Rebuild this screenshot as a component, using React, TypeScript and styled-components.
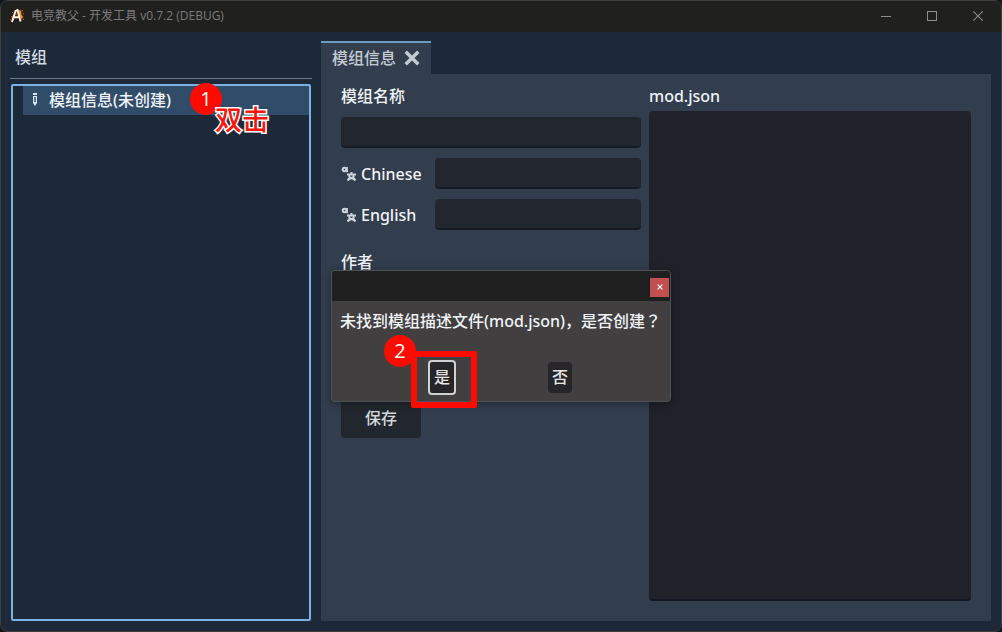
import React from "react";
import styled, { createGlobalStyle } from "styled-components";

const Global = createGlobalStyle`
  * { box-sizing: border-box; }
  body {
    margin: 0;
    background: #14181c;
    color: #f0f3f6;
    font: 500 16px/24px "Noto Sans", "Noto Sans CJK SC", sans-serif;
  }
  button, input, textarea { font: inherit; color: inherit; }
`;

const Frame = styled.div`
  position: relative;
  display: flex;
  flex-direction: column;
  min-height: 100vh;
  border: 1px solid #3c3f3e;
  border-radius: 8px;
  background: #1d2938;
  overflow: hidden;
`;

const TitleBar = styled.header`
  display: flex;
  align-items: center;
  height: 31px;
  padding: 0 0 2px 8px;
  background: #20201f;
`;

const AppTitle = styled.h1`
  flex: 1;
  margin: 0 0 0 6px;
  color: #7c7c7c;
  font: 400 12px/16px "Open Sans", "Noto Sans CJK SC", sans-serif;
`;

const WindowButton = styled.button`
  display: flex;
  align-items: center;
  justify-content: center;
  width: 46px;
  height: 28px;
  padding: 0;
  border: 0;
  background: none;
  color: #8c8c8c;
`;

const Body = styled.main`
  flex: 1;
  display: grid;
  grid-template-columns: 302px minmax(0, 1fr);
  gap: 9px;
  padding: 9px 10px 10px 9px;
`;

const Sidebar = styled.section`
  display: flex;
  flex-direction: column;
`;

const SidebarTitle = styled.h2`
  margin: 0 0 5px;
  padding: 4px 5px 9px;
  border-bottom: 1px solid #6e7987;
  color: #d3dae2;
  font: inherit;
`;

const Tree = styled.div`
  flex: 1;
  margin: 0 1px;
  padding-left: 10px;
  border: 2px solid #7ab2e6;
  border-radius: 2px;
`;

const TreeItem = styled.button`
  position: relative;
  display: flex;
  align-items: center;
  gap: 10px;
  width: 100%;
  height: 29px;
  padding: 0 0 2px 8px;
  border: 0;
  background: #304c68;
  text-align: left;
`;

const Workspace = styled.section`
  display: flex;
  flex-direction: column;
`;

const Tab = styled.div`
  display: flex;
  align-items: center;
  gap: 8px;
  align-self: flex-start;
  height: 33px;
  padding: 0 11px 2px;
  border-top: 2px solid #6d9abf;
  background: #323d4d;
  color: #c3cbd3;
`;

const TabClose = styled.button`
  display: flex;
  padding: 0;
  border: 0;
  background: none;
`;

const Panel = styled.div`
  flex: 1;
  display: grid;
  grid-template-columns: 300px minmax(0, 1fr);
  gap: 8px;
  padding: 10px 20px 20px;
  background: #323d4d;
`;

const Form = styled.form`
  display: flex;
  flex-direction: column;
  gap: 10px;
`;

const Label = styled.label`
  display: flex;
  align-items: center;
  gap: 4px;
`;

const TextInput = styled.input`
  width: 100%;
  height: 31px;
  padding: 0 8px;
  border: 0;
  border-bottom: 2px solid #151b24;
  border-radius: 4px;
  background: #22262e;
`;

const LocaleRow = styled.div`
  display: grid;
  grid-template-columns: 84px minmax(0, 1fr);
  gap: 10px;
`;

const Group = styled.div<{ $top?: number }>`
  display: flex;
  flex-direction: column;
  gap: 9px;
  margin-top: ${(p) => p.$top ?? 0}px;
`;

const SaveButton = styled.button`
  align-self: flex-start;
  width: 80px;
  height: 40px;
  margin-top: 74px;
  border: 0;
  border-radius: 4px;
  background: #22272f;
  color: #d5d9de;
`;

const Preview = styled.div`
  display: flex;
  flex-direction: column;
  gap: 3px;
`;

const Source = styled.textarea`
  flex: 1;
  width: 100%;
  padding: 8px;
  border: 0;
  border-bottom: 2px solid #121823;
  border-radius: 4px;
  background: #212229;
  resize: none;
`;

const Overlay = styled.div`
  position: absolute;
  inset: 39px 0 0;
  display: flex;
  align-items: center;
  justify-content: center;
`;

const Dialog = styled.section`
  display: flex;
  flex-direction: column;
  width: 340px;
  height: 132px;
  border: 1px solid #4b5357;
  border-radius: 4px;
  background: #413f40;
  box-shadow: 0 2px 8px rgba(0, 0, 0, 0.35);
`;

const DialogBar = styled.div`
  display: flex;
  align-items: center;
  justify-content: flex-end;
  height: 30px;
  padding: 3px 1px 0 0;
  border-radius: 3px 3px 0 0;
  background: #201f20;
`;

const DialogClose = styled.button`
  display: flex;
  align-items: center;
  justify-content: center;
  width: 19px;
  height: 19px;
  padding: 0;
  border: 0;
  background: #c25051;
  color: #ffffff;
`;

const Message = styled.p`
  margin: 8px 0 0 8px;
  white-space: nowrap;
`;

const CenteredMark = styled.span`
  font-family: "Noto Sans CJK TC", sans-serif;
  line-height: 16px;
`;

const Actions = styled.div`
  display: flex;
  align-items: center;
  gap: 92px;
  margin: 27px 0 0 96px;
`;

const Choice = styled.button<{ $focused?: boolean }>`
  position: relative;
  width: ${(p) => (p.$focused ? 28 : 24)}px;
  height: ${(p) => (p.$focused ? 35 : 31)}px;
  padding: 0;
  border: ${(p) => (p.$focused ? "2px solid #cfd0d2" : "0")};
  border-radius: 4px;
  background: #262528;
  color: #e6e6e6;
`;

const Badge = styled.span<{ $x: number; $y: number }>`
  position: absolute;
  left: ${(p) => p.$x}px;
  top: ${(p) => p.$y}px;
  z-index: 2;
  width: 32px;
  height: 32px;
  border-radius: 50%;
  background: #fe0b00;
  color: #ffffff;
  font: 400 20px/32px "Open Sans", sans-serif;
  text-align: center;
`;

const Hint = styled.span`
  position: absolute;
  left: 192px;
  top: 17px;
  z-index: 3;
  color: #fe1408;
  font: 500 27px/32px "Noto Sans CJK SC", sans-serif;
  -webkit-text-stroke: 3px #ffffff;
  paint-order: stroke fill;
`;

const Highlight = styled.span`
  position: absolute;
  left: -19px;
  top: -11px;
  width: 66px;
  height: 57px;
  border: 6px solid #fe0b00;
  border-radius: 2px;
`;

const Logo = () => (
  <svg width="16" height="16" viewBox="0 0 16 16" aria-hidden="true">
    <path d="M7 4l5-3 2 3-1 3 2 3-3 3-3-4-4 1-3 2 1-4z" fill="#6b2c10" />
    <path d="M9 2l3 1v3l2 3-2 2-2-4z" fill="#f09a24" />
    <path d="M2 8l1 1M13 3l1-1M14 11l1 1M3 4l1 1M1 12h1M14 6h1" stroke="#e0601c" />
    <path d="M3 14L6.500 3 8.500 2l3 11.500M4 9.500l6-.5" fill="none" stroke="#fff4e4" strokeWidth="1.900" />
  </svg>
);

const LocaleIcon = () => (
  <svg width="16" height="16" viewBox="0 0 16 16" fill="none" stroke="#cdd4dc" aria-hidden="true">
    <circle cx="3.500" cy="3.500" r="1.800" strokeWidth="2" />
    <path d="M6 1v4.500h1" strokeWidth="1.700" />
    <path d="M6 8.500h9M10.500 6v2.500M8 9.500l1 2-2.500 3M13 9.500l-1 2 2.500 3M8.500 12h4M7 14l3.500-2 3.500 2" strokeWidth="2" />
  </svg>
);

const Pencil = () => (
  <svg width="8" height="14" viewBox="0 0 8 14" aria-hidden="true">
    <path d="M2 0h4v2H2zM2 3h4v7l-2 3-2-3z" fill="#dbe8f4" />
    <path d="M4 4v5" stroke="#304c68" strokeWidth="1.500" />
  </svg>
);

const Cross = ({ size, width }: { size: number; width: number }) => (
  <svg width={size} height={size} viewBox="0 0 14 14" stroke="currentColor" strokeWidth={width} aria-hidden="true">
    <path d="M1.500 1.500l11 11M12.500 1.500l-11 11" />
  </svg>
);

const locales = ["Chinese", "English"];

export default function App() {
  return (
    <>
      <Global />
      <Frame>
        <TitleBar>
          <Logo />
          <AppTitle>电竞教父 - 开发工具 v0.7.2 (DEBUG)</AppTitle>
          <WindowButton aria-label="最小化">
            <svg width="10" height="10" stroke="currentColor"><path d="M0 5.500h10" /></svg>
          </WindowButton>
          <WindowButton aria-label="最大化">
            <svg width="10" height="10" fill="none" stroke="currentColor"><rect x=".5" y=".5" width="9" height="9" /></svg>
          </WindowButton>
          <WindowButton aria-label="关闭"><Cross size={12} width={1.2} /></WindowButton>
        </TitleBar>

        <Body>
          <Sidebar>
            <SidebarTitle>模组</SidebarTitle>
            <Tree>
              <TreeItem>
                <Pencil />
                模组信息(未创建)
                <Badge $x={167} $y={-3}>1</Badge>
                <Hint>双击</Hint>
              </TreeItem>
            </Tree>
          </Sidebar>

          <Workspace>
            <Tab>
              模组信息
              <TabClose aria-label="关闭标签"><Cross size={16} width={3} /></TabClose>
            </Tab>
            <Panel>
              <Form onSubmit={(e) => e.preventDefault()}>
                <Group>
                  <Label htmlFor="name">模组名称</Label>
                  <TextInput id="name" />
                </Group>
                {locales.map((name) => (
                  <LocaleRow key={name}>
                    <Label htmlFor={name}><LocaleIcon />{name}</Label>
                    <TextInput id={name} />
                  </LocaleRow>
                ))}
                <Group $top={10}>
                  <Label htmlFor="author">作者</Label>
                  <TextInput id="author" />
                </Group>
                <SaveButton>保存</SaveButton>
              </Form>
              <Preview>
                <Label htmlFor="source">mod.json</Label>
                <Source id="source" />
              </Preview>
            </Panel>
          </Workspace>
        </Body>

        <Overlay>
          <Dialog role="dialog" aria-labelledby="message">
            <DialogBar>
              <DialogClose aria-label="关闭对话框"><Cross size={6} width={3} /></DialogClose>
            </DialogBar>
            <Message id="message">
              未找到模组描述文件(mod.json)，是否创建<CenteredMark lang="zh-TW">？</CenteredMark>
            </Message>
            <Actions>
              <Choice $focused>
                是
                <Highlight />
                <Badge $x={-46} $y={-27}>2</Badge>
              </Choice>
              <Choice>否</Choice>
            </Actions>
          </Dialog>
        </Overlay>
      </Frame>
    </>
  );
}
